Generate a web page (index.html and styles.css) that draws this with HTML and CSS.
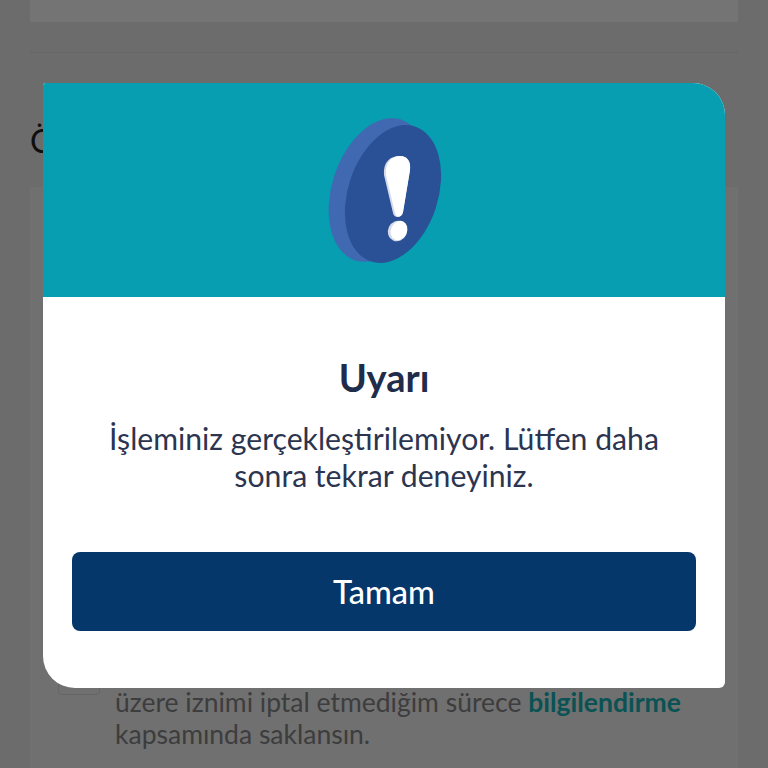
FILE: index.html
```html
<!DOCTYPE html>
<html lang="tr">
<head>
    <meta charset="UTF-8">
    <meta name="viewport" content="width=device-width, initial-scale=1.0">
    <title>Uyarı</title>
    <link rel="stylesheet" href="styles.css">
</head>
<body>
    <div class="page">
        <div class="top-card"></div>
        <div class="divider"></div>
        <h2 class="section-title">Ö</h2>
        <div class="consent-card">
            <div class="consent-row">
                <div class="checkbox"></div>
                <p class="consent-text">üzere iznimi iptal etmediğim sürece <b>bilgilendirme</b> kapsamında saklansın.</p>
            </div>
        </div>
    </div>
    <div class="overlay"></div>
    <div class="modal">
        <div class="modal-head">
            <svg class="alert-icon" width="114" height="150" viewBox="0 0 114 150">
                <ellipse cx="50" cy="75" rx="46" ry="74" transform="rotate(18 50 75)" fill="#4069b2"/>
                <ellipse cx="65" cy="79" rx="45" ry="71" transform="rotate(18 65 79)" fill="#2a5195"/>
                <path d="M56 60C55 47 62 41 72 41C79 41 83 46 82 55L75 97C74 103 66 104 65 98Z" fill="#d5dbe8"/>
                <path d="M58 60C57 47 64 41 72 41C79 41 83 46 82 55L75 97C74 103 68 103 67 98Z" fill="#fff"/>
                <ellipse cx="69.500" cy="116" rx="9.500" ry="10.500" transform="rotate(25 69.500 116)" fill="#d5dbe8"/>
                <ellipse cx="71" cy="115.500" rx="8" ry="10" transform="rotate(25 71 115.500)" fill="#fff"/>
            </svg>
        </div>
        <div class="modal-body">
            <h1 class="modal-title">Uyarı</h1>
            <p class="modal-text">İşleminiz gerçekleştirilemiyor. Lütfen daha sonra tekrar deneyiniz.</p>
            <button class="modal-btn">Tamam</button>
        </div>
    </div>
</body>
</html>
```

FILE: styles.css
```css
html,body{
    margin:0;
    height:100%;
    overflow:hidden;
    font-family: "Lato", "Noto Sans", sans-serif;
    background-color:#ebebee;
}
.page{
    width:708px;
    margin-left:30px;
}
.top-card{
    height:22px;
    background-color:#fdfdfd;
}
.divider{
    height:1px;
    margin-top:30px;
    background-color:#dcdcdf;
}
.section-title{
    margin:70px 0 0;
    height:64px;
    font-size:32px;
    font-weight:400;
    line-height:36px;
    color:#222;
}
.consent-card{
    height:600px;
    box-sizing:border-box;
    padding:466px 28px 0;
    background-color:#f4f4f4;
}
.consent-row{
    display:flex;
    gap:15px;
}
.checkbox{
    width:42px;
    height:42px;
    flex-shrink:0;
    border:1px solid #dcdcdc;
    box-sizing:border-box;
    border-radius:4px;
}
.consent-text{
    margin:33px 0 0;
    font-size:26.5px;
    line-height:32px;
    color:#858587;
}
.consent-text b{
    color:#16b4b6;
}
.overlay{
    position:fixed;
    inset:0;
    background-color:rgba(0,0,0,0.54);
}
.modal{
    position:absolute;
    left:43px;
    top:83px;
    width:682px;
    height:605px;
    background-color:#fff;
    border-radius:3px 32px 6px 32px;
    overflow:hidden;
}
.modal-head{
    height:214px;
    display:flex;
    justify-content:center;
    align-items:center;
    background-color:#069eb0;
}
.alert-icon{
    margin-left:2px;
}
.modal-body{
    padding:0 29px;
    text-align:center;
}
.modal-title{
    margin:58px 0 0;
    font-size:38px;
    font-weight:700;
    line-height:44px;
    color:#212b4a;
}
.modal-text{
    margin:21px 0 0;
    padding:0 30px;
    font-size:30.2px;
    font-weight:400;
    line-height:37px;
    color:#2c3550;
}
.modal-btn{
    display:block;
    width:100%;
    height:79px;
    margin-top:58px;
    border:0;
    border-radius:8px;
    background-color:#05376b;
    color:#fff;
    font-family:inherit;
    font-size:32.5px;
    font-weight:500;
}
```
